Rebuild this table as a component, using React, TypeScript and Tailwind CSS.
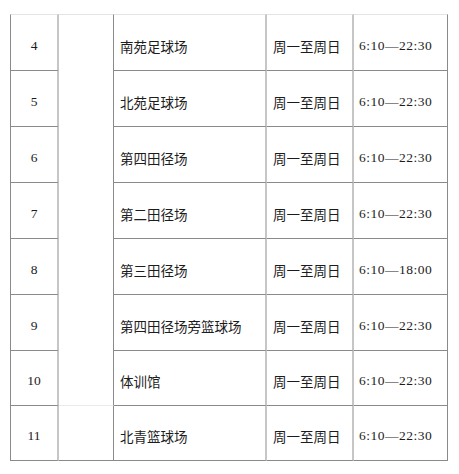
import React from "react";

const rows = [
  { n: "4", name: "南苑足球场", time: "6:10—22:30" },
  { n: "5", name: "北苑足球场", time: "6:10—22:30" },
  { n: "6", name: "第四田径场", time: "6:10—22:30" },
  { n: "7", name: "第二田径场", time: "6:10—22:30" },
  { n: "8", name: "第三田径场", time: "6:10—18:00" },
  { n: "9", name: "第四田径场旁篮球场", time: "6:10—22:30" },
  { n: "10", name: "体训馆", time: "6:10—22:30" },
  { n: "11", name: "北青篮球场", time: "6:10—22:30" },
];

const heights = ["h-[57px]", "h-[56px]", "h-[56px]", "h-[56px]", "h-[56px]", "h-[56px]", "h-[55px]", "h-[55px]"];
const tops = ["border-t border-t-[#e4e4e4]", "", "", "", "", "", "", ""];

export default function App() {
  return (
    <div className="w-[459px] h-[474px] bg-white pt-[14px] pl-[10px] text-[13.5px] text-[#1c1c1c] font-['Liberation_Serif','Noto_Sans_CJK_SC',serif]">
      <div className="flex w-[438px]">
        <div className="flex flex-col w-[49px]">
          {rows.map((r, i) => (
            <div
              key={r.n}
              className={`${heights[i]} ${tops[i]} border-l border-l-[#8a8a8a] border-r-2 border-r-[#c6c6c6] border-b border-b-[#8a8a8a] flex items-center justify-center pt-[7px]`}
            >
              {r.n}
            </div>
          ))}
        </div>
        <div className="flex flex-col w-[55px]">
          <div className="h-[392px] border-t border-t-[#e4e4e4] border-r border-r-[#8a8a8a] border-b border-b-[#ebebeb]" />
          <div className="h-[55px] border-r border-r-[#8a8a8a] border-b border-b-[#8a8a8a]" />
        </div>
        <div className="flex flex-col w-[334px]">
          {rows.map((r, i) => (
            <div key={r.n} className={`${heights[i]} flex`}>
              <div
                className={`w-[153px] ${tops[i]} border-r-2 border-r-[#c6c6c6] border-b border-b-[#8a8a8a] flex items-center pl-[6px] pt-[7px]`}
              >
                <span className="font-['Noto_Sans_CJK_SC',sans-serif]">{r.name}</span>
              </div>
              <div
                className={`w-[87px] ${tops[i]} border-r-2 border-r-[#c6c6c6] border-b border-b-[#8a8a8a] flex items-center pl-[6px] pt-[7px]`}
              >
                <span className="font-['Noto_Sans_CJK_SC',sans-serif]">周一至周日</span>
              </div>
              <div
                className={`w-[94px] ${tops[i]} border-r border-r-[#8a8a8a] border-b border-b-[#8a8a8a] flex items-center pl-[5px] pt-[7px] tracking-[0.5px]`}
              >
                {r.time}
              </div>
            </div>
          ))}
        </div>
      </div>
    </div>
  );
}
